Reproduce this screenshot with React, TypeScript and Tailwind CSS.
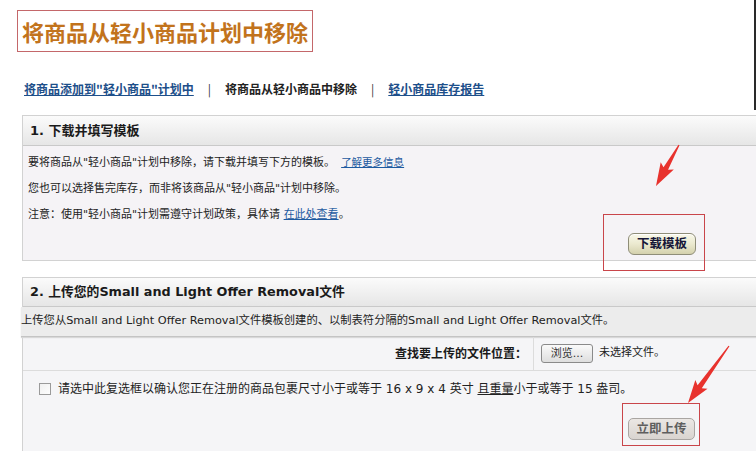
import React from 'react';

const sans = "font-['DejaVu_Sans','Noto_Sans_CJK_SC',sans-serif]";

function Arrow({ tail, tip }: { tail: [number, number]; tip: [number, number] }) {
  const dx = tip[0] - tail[0];
  const dy = tip[1] - tail[1];
  const len = Math.hypot(dx, dy);
  const ux = dx / len;
  const uy = dy / len;
  const nx = -uy;
  const ny = ux;
  const head = 20;
  const neck: [number, number] = [tip[0] - ux * head, tip[1] - uy * head];
  const back: [number, number] = [tip[0] - ux * (head + 3), tip[1] - uy * (head + 3)];
  const pt = (p: [number, number], w: number) => `${p[0] + nx * w},${p[1] + ny * w}`;
  const pts = [
    pt(tail, 0.6),
    pt(neck, 2.6),
    pt(back, 7.5),
    `${tip[0]},${tip[1]}`,
    pt(back, -7.5),
    pt(neck, -2.6),
    pt(tail, -0.6),
  ].join(' ');
  return <polygon points={pts} fill="#e8322d" />;
}

export default function App() {
  return (
    <div className={`relative w-[756px] h-[451px] overflow-hidden bg-white ${sans}`}>
      {/* title + sub nav */}
      <div className="h-[110px] border-r-2 border-[#2a2a2a] pt-[10px]">
        <div className="ml-[17px] inline-flex h-[42px] items-center border border-[#c4676a] px-[4px]">
          <span className="font-['Noto_Sans_CJK_SC',sans-serif] text-[22px] font-bold leading-none text-[#c2731c]">
            将商品从轻小商品计划中移除
          </span>
        </div>
        <div className="mt-[29px] ml-[24px] flex items-center text-[12px] font-bold leading-[16px] font-['Noto_Sans_CJK_SC',sans-serif]">
          <a className="text-[#1d4f8a] underline">将商品添加到"轻小商品"计划中</a>
          <span className="mx-[14px] text-[#333] font-normal">|</span>
          <span className="text-[#222]">将商品从轻小商品中移除</span>
          <span className="mx-[14px] text-[#333] font-normal">|</span>
          <a className="text-[#1d4f8a] underline">轻小商品库存报告</a>
        </div>
      </div>

      {/* panel 1 */}
      <div className="mt-[5px] ml-[22px] border-t border-l border-b border-[#d2d2d2]">
        <div className="flex h-[30px] items-center border-b border-[#c9c9c9] bg-gradient-to-b from-[#fbfbfb] to-[#e6e6e6] pl-[7px] text-[13px] font-bold text-[#1a1a1a]">
          1. 下载并填写模板
        </div>
        <div className="bg-[#f5f3f6] pt-[3px] pb-[5px] pl-[5px] text-[11px] leading-[26px] text-[#222]">
          <div>
            要将商品从"轻小商品"计划中移除，请下载并填写下方的模板。
            <a className="ml-[6px] text-[10.5px] text-[#1d5aa0] underline">了解更多信息</a>
          </div>
          <div>您也可以选择售完库存，而非将该商品从"轻小商品"计划中移除。</div>
          <div>
            注意：使用"轻小商品"计划需遵守计划政策，具体请{' '}
            <a className="text-[#1d5aa0] underline">在此处查看</a>。
          </div>
          <div className="mt-[5px] flex justify-end pr-[60px]">
            <button className="h-[22px] w-[68px] rounded-[6px] border border-[#8f8d78] bg-gradient-to-b from-[#f9f8ea] via-[#ebe9cf] to-[#d4d1ad] text-[12.5px] font-bold leading-none text-[#161638] shadow-[inset_0_1px_0_#fff]">
              下载模板
            </button>
          </div>
        </div>
      </div>

      {/* panel 2 */}
      <div className="mt-[16px] ml-[22px] border-t border-l border-[#d2d2d2] bg-[#f5f5f7]">
        <div className="flex h-[29px] items-center border-b border-[#c9c9c9] bg-gradient-to-b from-[#fbfbfb] to-[#e6e6e6] pl-[7px] text-[12.8px] font-bold text-[#1a1a1a]">
          2. 上传您的Small and Light Offer Removal文件
        </div>
        <div className="flex h-[30px] items-center border-b border-[#c4c4c4] bg-[#ececec] -ml-[2px] text-[11.3px] text-[#222] shadow-[0_1px_1px_#d8d8d8]">
          上传您从Small and Light Offer Removal文件模板创建的、以制表符分隔的Small and Light Offer Removal文件。
        </div>
        <div className="flex h-[34px] border-b border-[#dcdcdc]">
          <div className="flex w-[511px] items-center justify-end border-r border-[#dcdcdc] pr-[6px] text-[12px] font-bold text-[#1a1a1a]">
            查找要上传的文件位置：
          </div>
          <div className="flex items-center pl-[7px]">
            <button className="h-[19px] w-[52px] rounded-[3px] border border-[#8a8a8a] bg-gradient-to-b from-[#fafafa] to-[#dedede] text-[11px] leading-none text-[#333]">
              浏览...
            </button>
            <span className="ml-[6px] text-[11px] text-[#222]">未选择文件。</span>
          </div>
        </div>
        <div className="flex items-center pt-[8px] pl-[16px] text-[12px] leading-[20px] text-[#222]">
          <span className="mr-[7px] h-[12px] w-[12px] border border-[#9a9a9a] bg-gradient-to-br from-[#f0f0f0] to-[#fdfdfd]" />
          <span>
            请选中此复选框以确认您正在注册的商品包裹尺寸小于或等于 16 x 9 x 4 英寸 <span className="underline">且重量</span>小于或等于 15 盎司。
          </span>
        </div>
        <div className="mt-[19px] flex justify-end pr-[61px]">
          <button className="h-[22px] w-[67px] rounded-[5px] border border-[#a9a5a2] bg-gradient-to-b from-[#ebe7e4] to-[#d9d4d0] text-[12.5px] font-bold leading-none text-[#5e5e5e]">
            立即上传
          </button>
        </div>
        <div className="h-[20px]" />
      </div>

      {/* annotation overlay */}
      <div className="pointer-events-none absolute left-[603px] top-[214px] h-[57px] w-[102px] border border-[#c9454a]" />
      <div className="pointer-events-none absolute left-[622px] top-[403px] h-[43px] w-[78px] border border-[#c9454a]" />
      <svg className="pointer-events-none absolute left-0 top-0" width="756" height="451">
        <Arrow tail={[679, 145]} tip={[656, 186]} />
        <Arrow tail={[729, 346]} tip={[688, 403]} />
      </svg>
    </div>
  );
}
